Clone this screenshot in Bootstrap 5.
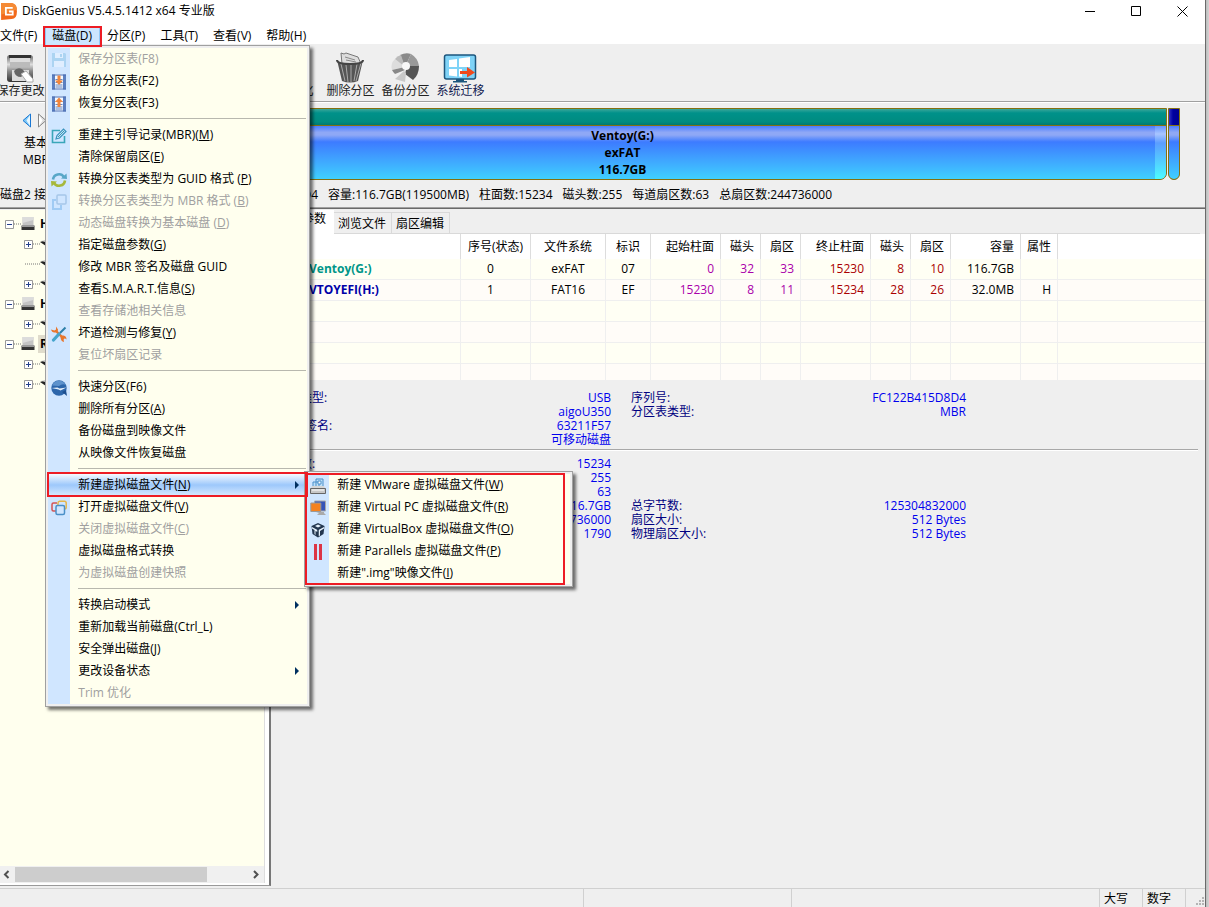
<!DOCTYPE html>
<html lang="zh-CN">
<head>
<meta charset="utf-8">
<meta name="viewport" content="width=device-width, initial-scale=1">
<title>DiskGenius</title>
<link href="https://cdn.jsdelivr.net/npm/bootstrap@5.3.0/dist/css/bootstrap.min.css" rel="stylesheet">
<style>
:root{--face:#efefef;--cream:#ffffee;--strip:#d0e6ff;--mark-red:#ed1c24}
body{font:12px/16px "Open Sans","Noto Sans CJK SC",sans-serif;color:#000;background:linear-gradient(90deg,#b4b4b4,#d4d4d4) right/4px 100% no-repeat #d0d0d0;overflow:hidden}
button{font:inherit;color:inherit;border:0;background:none;padding:0;text-align:left}
svg{display:block;flex:none}
.app-window{min-height:100vh;margin-right:3px;border-right:1px solid #6a6a6a;background:var(--face)}
.title-bar{height:22px;background:#fff;gap:5px}
.title-bar .caption{padding-right:17px;gap:35px}
.menu-row{height:22px;background:#fff;padding-top:5px}
.menu-row>.dropdown>.menu-link{display:block;padding:0 8px 0 7px;line-height:18px;height:19px;color:#000;text-decoration:none;white-space:nowrap}
.menu-row>.dropdown:first-child{margin-left:-8px}
.menu-row>.dropdown:first-child>.menu-link{padding-left:8px}
.menu-row .opened{background:#cce6ff;box-shadow:inset 0 0 0 1px #93c9f5}
.ring{position:absolute;border:2px solid var(--mark-red);pointer-events:none;z-index:1100}
.ring-top{inset:-1px -2px -3px -2px}
.ring-row{inset:-2px -1px -1px -1px}
.ring-sub{inset:1px 7px 1px 0}
/* pop-up menus */
.dropdown-menu.pop{display:block;min-width:0;padding:2px;margin:0;border:1px solid #a0a0a0;border-radius:0;background:var(--face);font-size:12px;color:#000;box-shadow:3px 3px 3px rgba(0,0,0,.55)}
.pop-main{left:0;top:18px;width:265px}
.pop-sub{left:256px;top:-3px;width:269px}
.pop-body{background:linear-gradient(90deg,var(--strip) 22px,var(--cream) 22px)}
.pop-item{display:flex;align-items:center;width:100%;height:22px;position:relative;white-space:nowrap}
.pop-item button{display:flex;align-items:center;width:100%;height:22px}
.pop-item .glyph{width:22px;height:22px;padding:4px 3px 2px;margin-right:8px;flex:none}
.pop-item .glyph svg{width:16px;height:16px}
.pop-item :disabled{color:#a0a0a0}
.pop-item :disabled .glyph{opacity:.35}
.pop-item.hot>button{background:linear-gradient(#f6faff,#9dc8fb 50%,#d8eaff)}
.arrow-r{margin-left:auto;margin-right:8px;border:4px solid transparent;border-left:4px solid #003060;border-right:0}
.pop-rule{height:10px;padding:4px 1px 0 30px}
.pop-rule i{display:block;border-top:1px solid #b8b8ae}
/* tool bar */
.tool-row{height:58px;border-bottom:1px solid #a0a0a0;box-shadow:0 1px #fff;overflow:hidden}
.tool-row button{width:55px;flex:none;padding-top:4px;text-align:center;line-height:16px;color:#222;font-family:"Liberation Sans","Noto Sans CJK SC",sans-serif}
.tool-row button:first-child{margin-left:-7px}
.tool-row svg,.tool-row .blank{width:34px;height:32px;margin:0 11px 0 10px}
.tool-row .navy{color:#102050}
/* disk map */
.disk-row{padding:6px 25px 0 0}
.disk-side{width:77px;padding:5px 5px 0 0;line-height:17px}
.disk-side .steps{padding-bottom:6px;gap:5px;margin-right:4px}
.disk-map{height:72px;gap:1px}
.part{border:1px solid #857010;border-radius:0 0 7px 7px;background:#857010}
.part-cap{height:16px;margin-bottom:1px;background:linear-gradient(#3aa79a,#00918a 25%,#008c80 80%,#007a70)}
.part-fill{height:53px;border-radius:0 0 6px 6px;line-height:17px;background:linear-gradient(#4a7cff,#8fa8f6 12%,#8fa8f6 17%,#3d7bff 30%,#3fa0ff 60%,#3fd0ff)}
.part-text{padding:1px 0 0 12px}
.part-used{width:11px;border-radius:0 0 6px 0;background:linear-gradient(#6495ff,#a9c5ff 15%,#5b9dff 32%,#4cfcff)}
.part-efi{width:12px}
.part-efi .part-cap{background:linear-gradient(90deg,#3030c0,#0000a0 40%,#000090)}
.facts{height:27px;line-height:30px;white-space:nowrap;overflow:hidden;gap:10px}
.facts .head-part{width:318px}
.facts span{flex:none}
/* lower panes */
.work{border-top:1px solid #a0a0a0;box-shadow:inset 0 1px #6a6a6a}
.tree-pane{width:271px;flex:none;border-right:2px solid #777;padding:0 4px 2px 0;border-bottom:1px solid #999;background:#fff;margin-top:2px}
.tree-box{background:var(--cream);padding-top:4px;border-right:1px solid #ddd}
.tree-line{height:20px;padding-left:5px}
.tree-line b{margin-left:3px;padding:1px 2px}
.tree-line .sel{background:#e0dccc}
.tree-line.kid{padding-left:24px}
.scroll-x{height:17px;background:#f0f0f0;border-right:1px solid #ddd}
.scroll-x .thumb{width:192px;height:15px;background:#cdcdcd}
.scroll-x button{width:15px;height:15px}
.detail-pane{min-width:0;margin-top:2px}
.tab-row{height:24px;border-bottom:1px solid #d9d9d9;margin-right:5px}
.tab-row .nav-link{color:#000;padding:3px 4px 0;width:58px;height:22px;border:1px solid #d9d9d9;border-left:0;border-bottom:0;border-radius:0;margin-top:2px;white-space:nowrap}
.tab-row .nav-link.active{background:#fff;height:24px;margin:0;width:63px;border:0;padding:1px 7px 0}
.part-table{table-layout:fixed;border-collapse:separate;border-spacing:0;margin:0;font-size:12px;border:0}
.part-table>:not(caption)>*>*{padding:0 6px;height:21px;line-height:20px;border:0;border-right:1px solid #efefef;border-bottom:1px solid #efefef;background:#fffff4;color:#000;box-shadow:none;white-space:nowrap;overflow:hidden}
.part-table>thead>tr>th{height:25px!important;line-height:24px!important;background:#fff!important;font-weight:400;border-right-color:#ddd!important;border-bottom:0!important}
.part-table>tbody>tr:nth-child(even)>td{background:#fffcf8}
.part-table>tbody>tr:last-child>td{height:16px;border-bottom:0}
.part-table>*>tr>:last-child{border-right:0!important}
.part-table>tbody>tr>td.c-from{color:#aa00aa}
.part-table>tbody>tr>td.c-to{color:#aa0000}
.part-table>tbody>tr>td.nm{padding-left:38px;font-weight:700}
.part-table>tbody>tr>td.teal{color:#009688}
.part-table>tbody>tr>td.blue{color:#0000a8}
.specs{padding:11px 0 2px 5px;line-height:14px;color:#000080}
.specs.lower{padding-top:6px}
.spec-cols{display:grid;grid-template-columns:335px 335px;column-gap:20px;grid-auto-rows:14px}
.spec-cols div{display:flex;justify-content:space-between;white-space:nowrap}
.spec-cols b{font-weight:400;color:#0000ee;margin-left:auto}
.spec-rule{margin:0 7px 0 0;border-top:1px solid #a8a8a8;border-bottom:1px solid #fff}
.state-row{height:19px;border-top:1px solid #d0d0d0;margin-top:2px}
.state-row span{border-left:1px solid #d0d0d0;width:43px;padding-left:4px;line-height:19px;flex:none}
.state-row .wide{width:308px}
.state-row .mid{width:208px}
.state-row .grip{width:20px;padding:8px 0 0 9px}
</style>
</head>
<body>
<svg width="0" height="0" class="position-absolute">
  <defs>
    <symbol id="disk" viewBox="0 0 13 14"><path d="M1 0h11v9H1z" fill="#c4c4c4"/><path d="M1 0h11v3L1 6z" fill="#dcdcdc"/><path d="M0 9h13v4H0z" fill="#333"/><path d="M0 8h13v2H0z" fill="#999"/></symbol>
    <symbol id="plus" viewBox="0 0 9 9"><path d="M.5.5h8v8h-8z" fill="#fff" stroke="#999"/><path d="M2 4.500h5M4.500 2v5" stroke="#24408c"/></symbol>
    <symbol id="minus" viewBox="0 0 9 9"><path d="M.5.5h8v8h-8z" fill="#fff" stroke="#999"/><path d="M2 4.500h5" stroke="#24408c"/></symbol>
    <symbol id="dots" viewBox="0 0 7 2"><path d="M0 1h7" stroke="#777" stroke-dasharray="1 1"/></symbol>
    <symbol id="vol" viewBox="0 0 12 8"><path d="M0 2l3-1 9 3v3L6 6z" fill="#222"/><path d="M1 1l4-1h7v3z" fill="#ccc"/></symbol>
    <symbol id="backup" viewBox="0 0 16 16"><path d="M1 .5h14v15H1z" fill="#f4f8fd"/><path d="M1 .5h3v15H1zM12 .5h3v15h-3z" fill="#5b7fc0"/><path d="M1 15h14M1 1h14" stroke="#4a6fb4"/><path d="M4.500 5.500h7M4.500 8.500h7M4.500 11h7M4.500 13h7" stroke="#6686c0"/><path d="M6.500 1.500h3v5H12l-4 4.500-4-4.500h2.500z" fill="#f0853c"/></symbol>
    <symbol id="restore" viewBox="0 0 16 16"><path d="M1 .5h14v15H1z" fill="#f4f8fd"/><path d="M1 .5h3v15H1zM12 .5h3v15h-3z" fill="#5b7fc0"/><path d="M1 15h14M1 1h14" stroke="#4a6fb4"/><path d="M4.500 5.500h7M4.500 8.500h7M4.500 11h7M4.500 13h7" stroke="#6686c0"/><path d="M6.500 11h3V6H12L8 1.500 4 6h2.500z" fill="#f0853c"/></symbol>
    <symbol id="boxes" viewBox="0 0 16 16"><path d="M5 11H2.500Q1 11 1 9.500v-5Q1 3 2.500 3H6" fill="none" stroke="#d35454" stroke-width="1.500"/><path d="M7 5V3q0-1.800 1.500-1.800h5Q15.200 1.200 15.200 3v4.500Q15.200 9 14 9" fill="none" stroke="#e5b64b" stroke-width="1.500"/><rect x="5" y="5.500" width="8.500" height="9" rx="1.500" fill="#d0e6ff" stroke="#4a90c8" stroke-width="1.500"/></symbol>
  </defs>
</svg>

<div class="app-window d-flex flex-column">
  <header class="title-bar d-flex align-items-center">
    <svg width="17" height="19" viewBox="0 0 16 18"><path d="M1 1h10q5 1 5 8t-5 7l-10 1z" fill="#f26a1b"/><path d="M1 1h10q5 1 5 6L1 12z" fill="#f58a35"/><path d="M12 5.500H5.500v6.500H12V9H8.500" fill="none" stroke="#fff" stroke-width="1.700"/></svg>
    <span>DiskGenius V5.4.5.1412 x64 专业版</span>
    <div class="caption d-flex ms-auto align-items-center">
      <button aria-label="最小化"><svg width="11" height="11"><path d="M0 5.500h10" stroke="#000"/></svg></button>
      <button aria-label="最大化"><svg width="11" height="11"><path d="M.5.5h9v9h-9z" fill="none" stroke="#000"/></svg></button>
      <button aria-label="关闭"><svg width="11" height="11"><path d="M.5.500l10 10M10.500.500l-10 10" stroke="#000"/></svg></button>
    </div>
  </header>

  <nav class="menu-row d-flex">
    <div class="dropdown"><a class="menu-link" href="#">文件(F)</a></div>
    <div class="dropdown position-relative"><a class="menu-link opened" href="#">磁盘(D)</a>
      <div class="dropdown-menu pop pop-main show">
        <div class="pop-body">
          <div class="pop-item"><button disabled><span class="glyph"><svg viewBox="0 0 16 16"><path d="M1 1h13l1 1v13H1z" fill="#6ab4dc"/><path d="M4 1h8v5H4z" fill="#fff"/><path d="M9 2h2v3H9z" fill="#6ab4dc"/><path d="M3 9h10v6H3z" fill="#fff"/></svg></span>保存分区表(F8)</button></div>
          <div class="pop-item"><button><span class="glyph"><svg><use href="#backup"/></svg></span>备份分区表(F2)</button></div>
          <div class="pop-item"><button><span class="glyph"><svg><use href="#restore"/></svg></span>恢复分区表(F3)</button></div>
          <div class="pop-rule"><i></i></div>
          <div class="pop-item"><button><span class="glyph"><svg viewBox="0 0 16 16"><path d="M9 2.500H1.500v12h12V8" fill="none" stroke="#3aa6b9" stroke-width="1.600"/><path d="M5 11l1-3.500 6.500-6.500 2.500 2.500L8.500 10z" fill="#cdeaf4" stroke="#3a93bd" stroke-width="1.200"/><path d="M7 9l6-6" stroke="#3a93bd"/></svg></span><span>重建主引导记录(MBR)(<u>M</u>)</span></button></div>
          <div class="pop-item"><button><span class="glyph"></span><span>清除保留扇区(<u>E</u>)</span></button></div>
          <div class="pop-item"><button><span class="glyph"><svg viewBox="0 0 16 16"><path d="M2 7.500A6 6 0 0 1 13 5" fill="none" stroke="#58a7c8" stroke-width="2.600"/><path d="M14 8.500A6 6 0 0 1 3 11" fill="none" stroke="#a6b83c" stroke-width="2.600"/><path d="M10 6.500l6 .500-.500-5.500z" fill="#58a7c8"/><path d="M6 9.500L0 9l.500 5.500z" fill="#a6b83c"/></svg></span><span>转换分区表类型为 GUID 格式 (<u>P</u>)</span></button></div>
          <div class="pop-item"><button disabled><span class="glyph"><svg viewBox="0 0 16 16"><rect x="6" y="1" width="9" height="9" rx="1" fill="none" stroke="#5a8fc0" stroke-width="1.500"/><path d="M5 6H2v9h8v-4" fill="none" stroke="#4a9be0" stroke-width="2"/></svg></span><span>转换分区表类型为 MBR 格式 (<u>B</u>)</span></button></div>
          <div class="pop-item"><button disabled><span class="glyph"></span><span>动态磁盘转换为基本磁盘 (<u>D</u>)</span></button></div>
          <div class="pop-item"><button><span class="glyph"></span><span>指定磁盘参数(<u>G</u>)</span></button></div>
          <div class="pop-item"><button><span class="glyph"></span>修改 MBR 签名及磁盘 GUID</button></div>
          <div class="pop-item"><button><span class="glyph"></span><span>查看S.M.A.R.T.信息(<u>S</u>)</span></button></div>
          <div class="pop-item"><button disabled><span class="glyph"></span>查看存储池相关信息</button></div>
          <div class="pop-item"><button><span class="glyph"><svg viewBox="0 0 16 16"><path d="M4.500 4.500l8.500 8.500" stroke="#e8762c" stroke-width="2.400"/><path d="M0 3.500Q1 7 4 6.500T7 3.500L5 .5v3L3.500 4.500zM9.500 11.500q0-2.500 3-2t3 4L13.500 12l-1 1 .5 3q-3-.500-3.500-4.500z" fill="#e8762c"/><path d="M14.500 1.500L9 7" stroke="#2c7fa8" stroke-width="2"/><path d="M8 8l-5.500 6" stroke="#45a5cc" stroke-width="3.200" stroke-linecap="round"/></svg></span><span>坏道检测与修复(<u>Y</u>)</span></button></div>
          <div class="pop-item"><button disabled><span class="glyph"></span>复位坏扇区记录</button></div>
          <div class="pop-rule"><i></i></div>
          <div class="pop-item"><button><span class="glyph"><svg viewBox="0 0 16 16"><circle cx="8" cy="8" r="7.700" fill="#2c66ab"/><path d="M1 5.500a7.500 7.500 0 0 1 14 0Q12 3 8 6z" fill="#5d92cc"/><path d="M.5 8l6-.500 2 1 7-1-6 3-2-1z" fill="#e4eefa"/><path d="M11 12l5 4-1-6z" fill="#1d4f8f"/></svg></span>快速分区(F6)</button></div>
          <div class="pop-item"><button><span class="glyph"></span><span>删除所有分区(<u>A</u>)</span></button></div>
          <div class="pop-item"><button><span class="glyph"></span>备份磁盘到映像文件</button></div>
          <div class="pop-item"><button><span class="glyph"></span>从映像文件恢复磁盘</button></div>
          <div class="pop-rule"><i></i></div>
          <div class="pop-item hot"><button><span class="glyph"></span><span>新建虚拟磁盘文件(<u>N</u>)</span><i class="arrow-r"></i></button>
            <div class="ring ring-row"></div>
            <div class="dropdown-menu pop pop-sub show">
              <div class="pop-body">
                <div class="pop-item"><button><span class="glyph"><svg viewBox="0 0 16 16"><path d="M3 4h6v6H3zM6 1h7v8H6z" fill="#bfe0f8" stroke="#4b8fc9"/><path d="M8 3h3v3H8z" fill="#fff" stroke="#4b8fc9"/><path d="M2 8l-1.500 3h15L14 8z" fill="#d5d5d5"/><path d="M.5 10.500h15v5H.5z" fill="#c8c8c8" stroke="#666"/><path d="M2 12h12" stroke="#fff"/></svg></span><span>新建 VMware 虚拟磁盘文件(<u>W</u>)</span></button></div>
                <div class="pop-item"><button><span class="glyph"><svg viewBox="0 0 16 16"><path d="M4.500 1h11v10h-11z" fill="#3554b8" stroke="#a8a8a8"/><path d="M.8 3h10v8.500h-10z" fill="#f58220" stroke="#999"/><path d="M6 12h8v1l2 2H7l2-2z" fill="#aaa"/></svg></span><span>新建 Virtual PC 虚拟磁盘文件(<u>R</u>)</span></button></div>
                <div class="pop-item"><button><span class="glyph"><svg viewBox="0 0 16 16"><path d="M1.500 4L8 1l6.500 3-1 8L8 15.500 2.500 12z" fill="#23364f"/><path d="M5 4l3-1.500L11 4 8 5.500zM2 5l5.500 3v2L5.500 9v4l-1-1V8L2 6.500zM14 5L8.500 8v6.500l1.500-1V9L14 6.500z" fill="#e6f1fb"/><path d="M8 7v8" stroke="#23364f"/></svg></span><span>新建 VirtualBox 虚拟磁盘文件(<u>O</u>)</span></button></div>
                <div class="pop-item"><button><span class="glyph"><svg viewBox="0 0 16 16"><path d="M4 0h3v16H4zM9 0h3v16H9z" fill="#dc3545"/></svg></span><span>新建 Parallels 虚拟磁盘文件(<u>P</u>)</span></button></div>
                <div class="pop-item"><button><span class="glyph"></span><span>新建".img"映像文件(<u>I</u>)</span></button></div>
              </div>
              <div class="ring ring-sub"></div>
            </div>
          </div>
          <div class="pop-item"><button><span class="glyph"><svg><use href="#boxes"/></svg></span><span>打开虚拟磁盘文件(<u>V</u>)</span></button></div>
          <div class="pop-item"><button disabled><span class="glyph"></span><span>关闭虚拟磁盘文件(<u>C</u>)</span></button></div>
          <div class="pop-item"><button><span class="glyph"></span>虚拟磁盘格式转换</button></div>
          <div class="pop-item"><button disabled><span class="glyph"></span>为虚拟磁盘创建快照</button></div>
          <div class="pop-rule"><i></i></div>
          <div class="pop-item"><button><span class="glyph"></span>转换启动模式<i class="arrow-r"></i></button></div>
          <div class="pop-item"><button><span class="glyph"></span>重新加载当前磁盘(Ctrl_L)</button></div>
          <div class="pop-item"><button><span class="glyph"></span><span>安全弹出磁盘(<u>J</u>)</span></button></div>
          <div class="pop-item"><button><span class="glyph"></span>更改设备状态<i class="arrow-r"></i></button></div>
          <div class="pop-item"><button disabled><span class="glyph"></span>Trim 优化</button></div>
        </div>
      </div>
      <div class="ring ring-top"></div>
    </div>
    <div class="dropdown"><a class="menu-link" href="#">分区(P)</a></div>
    <div class="dropdown"><a class="menu-link" href="#">工具(T)</a></div>
    <div class="dropdown"><a class="menu-link" href="#">查看(V)</a></div>
    <div class="dropdown"><a class="menu-link" href="#">帮助(H)</a></div>
  </nav>

  <div class="tool-row d-flex text-nowrap">
    <button><svg viewBox="0 0 34 32"><defs><linearGradient id="sv" x2="0" y2="1"><stop stop-color="#666"/><stop offset=".35" stop-color="#ddd"/><stop offset=".6" stop-color="#888"/><stop offset="1" stop-color="#333"/></linearGradient></defs><rect x="4" y="4" width="26" height="27" rx="3" fill="url(#sv)"/><path d="M6 4h22v3H6z" fill="#333"/><path d="M7 7h20v9H7z" fill="#ddd"/><path d="M7 11h20v5H7z" fill="#bbb"/><path d="M9 19h17v11H9z" fill="#ddd"/><path d="M11 20q3-4 8-2l4 4-5 4q-6 0-7-6z" fill="#666"/><path d="M18 23l5-3 7 8v3h-6z" fill="#fff" stroke="#aaa"/></svg>保存更改</button>
    <button aria-label="搜索分区"></button>
    <button aria-label="恢复文件"></button>
    <button aria-label="快速分区"></button>
    <button aria-label="新建分区"></button>
    <button><div class="blank"></div>格式化</button>
    <button><svg viewBox="0 0 34 32"><path d="M8 2l3 1 2-1 12 4 3 7H9z" fill="#ddd" stroke="#777"/><path d="M12 6l10 3M13 9l10 2" stroke="#888"/><path d="M4 9l5 21q8 3 16 0l5-21q-2 4-13 4T4 9z" fill="#555"/><path d="M8 13l4 17M13 14l2 17M18 14v17M24 13l-3 17M28 12l-5 18" stroke="#aaa"/><path d="M4 9q0 4 13 4t13-4" fill="none" stroke="#444" stroke-width="2"/></svg>删除分区</button>
    <button><svg viewBox="0 0 34 32"><path d="M17 16L12 4q6-3 11-1z" fill="#8a8a8a"/><path d="M17 16l6-13q7 4 8 12z" fill="#999"/><path d="M19 15l12 0q0 9-6 14l-8-6z" fill="#555"/><path d="M17 16L4 19q-2-6 3-11z" fill="#ddd"/><path d="M17 16L7 8q2-3 6-4z" fill="#bbb"/><path d="M17 16L4 19q1 2 3 4l10-4z" fill="#888"/><path d="M16 20L7 28l10 3 1-9z" fill="#c8c8c8"/><circle cx="18" cy="15" r="4" fill="#f8f8f8"/></svg>备份分区</button>
    <button class="navy"><svg viewBox="0 0 34 32"><rect x="1.500" y="4" width="31" height="24" rx="2" fill="#7fd3f7" stroke="#1c567d" stroke-width="1.500"/><path d="M13 28h8v2h3v1.500H10V30h3z" fill="#1c567d"/><path d="M6 9l8-1v8H6zM16 7.500L27 6v10H16zM6 18h8v7.500l-8-1zM16 18h3v8l-3-.500z" fill="#fff"/><path d="M17 20h7v-4l8 5.500-8 5v-3.500h-7z" fill="#f04a1d"/></svg>系统迁移</button>
  </div>

  <section class="disk-row d-flex">
    <div class="disk-side text-center">
      <div class="steps d-flex justify-content-center">
        <button aria-label="上一个磁盘"><svg width="10" height="15"><path d="M8.500 1v13L1 7.500z" fill="#7cc8f8" stroke="#1976d2"/><path d="M8 2v11L4.500 7.500z" fill="#e8f6ff"/></svg></button>
        <button aria-label="下一个磁盘"><svg width="10" height="15"><path d="M1.500 1v13L9 7.500z" fill="#ddd" stroke="#888"/><path d="M2 2v11l3.500-5.500z" fill="#fff"/></svg></button>
      </div>
      基本<br>MBR
    </div>
    <div class="disk-map d-flex flex-grow-1">
      <div class="part flex-grow-1"><div class="part-cap"></div>
        <div class="part-fill d-flex fw-bold text-center"><div class="part-text flex-grow-1">Ventoy(G:)<br>exFAT<br>116.7GB</div><div class="part-used"></div></div>
      </div>
      <div class="part part-efi"><div class="part-cap"></div><div class="part-fill"></div></div>
    </div>
  </section>
  <div class="facts d-flex"><span class="head-part d-flex justify-content-between"><span>磁盘2 接口:USB</span><span>序列号:FC122B415D8D4</span></span><span>容量:116.7GB(119500MB)</span><span>柱面数:15234</span><span>磁头数:255</span><span>每道扇区数:63</span><span>总扇区数:244736000</span></div>

  <main class="work d-flex flex-grow-1">
    <aside class="tree-pane d-flex flex-column">
      <div class="tree-box flex-grow-1">
        <div class="tree-line d-flex align-items-center"><svg width="9" height="9"><use href="#minus"/></svg><svg width="7" height="2"><use href="#dots"/></svg><svg width="14" height="14"><use href="#disk"/></svg><b>HD0:</b></div>
        <div class="tree-line kid d-flex align-items-center"><svg width="9" height="9"><use href="#plus"/></svg><svg width="7" height="2"><use href="#dots"/></svg><svg width="12" height="8"><use href="#vol"/></svg></div>
        <div class="tree-line kid d-flex align-items-center"><svg width="9" height="2"><use href="#dots"/></svg><svg width="7" height="2"><use href="#dots"/></svg><svg width="12" height="8"><use href="#vol"/></svg></div>
        <div class="tree-line kid d-flex align-items-center"><svg width="9" height="9"><use href="#plus"/></svg><svg width="7" height="2"><use href="#dots"/></svg><svg width="12" height="8"><use href="#vol"/></svg></div>
        <div class="tree-line d-flex align-items-center"><svg width="9" height="9"><use href="#minus"/></svg><svg width="7" height="2"><use href="#dots"/></svg><svg width="14" height="14"><use href="#disk"/></svg><b>HD1:</b></div>
        <div class="tree-line kid d-flex align-items-center"><svg width="9" height="9"><use href="#plus"/></svg><svg width="7" height="2"><use href="#dots"/></svg><svg width="12" height="8"><use href="#vol"/></svg></div>
        <div class="tree-line d-flex align-items-center"><svg width="9" height="9"><use href="#minus"/></svg><svg width="7" height="2"><use href="#dots"/></svg><svg width="14" height="14"><use href="#disk"/></svg><b class="sel">RD2:</b></div>
        <div class="tree-line kid d-flex align-items-center"><svg width="9" height="9"><use href="#plus"/></svg><svg width="7" height="2"><use href="#dots"/></svg><svg width="12" height="8"><use href="#vol"/></svg></div>
        <div class="tree-line kid d-flex align-items-center"><svg width="9" height="9"><use href="#plus"/></svg><svg width="7" height="2"><use href="#dots"/></svg><svg width="12" height="8"><use href="#vol"/></svg></div>
      </div>
      <div class="scroll-x d-flex align-items-center">
        <button aria-label="向左滚动"><svg width="15" height="15"><path d="M8.500 4L5 7.500 8.500 11" fill="none" stroke="#505050" stroke-width="2"/></svg></button>
        <div class="thumb"></div>
        <button class="ms-auto" aria-label="向右滚动"><svg width="15" height="15"><path d="M5 4l3.500 3.500L5 11" fill="none" stroke="#505050" stroke-width="2"/></svg></button>
      </div>
    </aside>

    <section class="detail-pane flex-grow-1">
      <nav class="nav tab-row flex-nowrap">
        <a class="nav-link active" href="#">分区参数</a>
        <a class="nav-link" href="#">浏览文件</a>
        <a class="nav-link" href="#">扇区编辑</a>
      </nav>
      <table class="table part-table">
        <colgroup><col style="width:190px"><col style="width:70px"><col style="width:75px"><col style="width:45px"><col style="width:70px"><col style="width:40px"><col style="width:40px"><col style="width:70px"><col style="width:40px"><col style="width:40px"><col style="width:70px"><col style="width:37px"><col></colgroup>
        <thead><tr><th></th><th class="text-center">序号(状态)</th><th class="text-center">文件系统</th><th class="text-center">标识</th><th class="text-end">起始柱面</th><th class="text-end">磁头</th><th class="text-end">扇区</th><th class="text-end">终止柱面</th><th class="text-end">磁头</th><th class="text-end">扇区</th><th class="text-end">容量</th><th class="text-end">属性</th><th></th></tr></thead>
        <tbody>
          <tr><td class="nm teal">Ventoy(G:)</td><td class="text-center pe-3">0</td><td class="text-center">exFAT</td><td class="text-center">07</td><td class="text-end c-from">0</td><td class="text-end c-from">32</td><td class="text-end c-from">33</td><td class="text-end c-to">15230</td><td class="text-end c-to">8</td><td class="text-end c-to">10</td><td class="text-end">116.7GB</td><td></td><td></td></tr>
          <tr><td class="nm blue">VTOYEFI(H:)</td><td class="text-center pe-3">1</td><td class="text-center">FAT16</td><td class="text-center">EF</td><td class="text-end c-from">15230</td><td class="text-end c-from">8</td><td class="text-end c-from">11</td><td class="text-end c-to">15234</td><td class="text-end c-to">28</td><td class="text-end c-to">26</td><td class="text-end">32.0MB</td><td class="text-end">H</td><td></td></tr>
          <tr><td></td><td></td><td></td><td></td><td></td><td></td><td></td><td></td><td></td><td></td><td></td><td></td><td></td></tr>
          <tr><td></td><td></td><td></td><td></td><td></td><td></td><td></td><td></td><td></td><td></td><td></td><td></td><td></td></tr>
          <tr><td></td><td></td><td></td><td></td><td></td><td></td><td></td><td></td><td></td><td></td><td></td><td></td><td></td></tr>
          <tr><td></td><td></td><td></td><td></td><td></td><td></td><td></td><td></td><td></td><td></td><td></td><td></td><td></td></tr>
        </tbody>
      </table>
      <div class="specs spec-cols">
        <div>接口类型:<b>USB</b></div><div>序列号:<b>FC122B415D8D4</b></div>
        <div><b>aigoU350</b></div><div>分区表类型:<b>MBR</b></div>
        <div>MBR 签名:<b>63211F57</b></div><div></div>
        <div><b>可移动磁盘</b></div><div></div>
      </div>
      <div class="spec-rule"></div>
      <div class="specs spec-cols lower">
        <div>柱面数:<b>15234</b></div><div></div>
        <div><b>255</b></div><div></div>
        <div><b>63</b></div><div></div>
        <div><b>116.7GB</b></div><div>总字节数:<b>125304832000</b></div>
        <div><b>244736000</b></div><div>扇区大小:<b>512 Bytes</b></div>
        <div><b>1790</b></div><div>物理扇区大小:<b>512 Bytes</b></div>
      </div>
    </section>
  </main>

  <footer class="state-row d-flex justify-content-end">
    <span class="mid"></span><span class="wide"></span><span>大写</span><span>数字</span>
    <span class="grip"><svg width="10" height="10" fill="#b4b4b4"><path d="M7 0h2v2H7zM7 3h2v2H7zM4 3h2v2H4zM7 6h2v2H7zM4 6h2v2H4zM1 6h2v2H1z"/></svg></span>
  </footer>
</div>
<script src="https://cdn.jsdelivr.net/npm/bootstrap@5.3.0/dist/js/bootstrap.bundle.min.js"></script>
</body>
</html>
